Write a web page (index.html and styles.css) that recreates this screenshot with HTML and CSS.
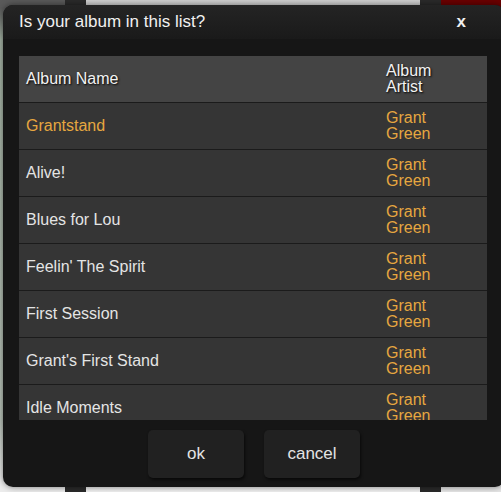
FILE: index.html
```html
<!DOCTYPE html>
<html lang="en">
<head>
  <meta charset="UTF-8" />
  <meta name="viewport" content="width=device-width, initial-scale=1.0" />
  <title>Is your album in this list?</title>
  <link rel="stylesheet" href="styles.css">
</head>
<body>

  <div class="page">
    <div class="strip strip-side"></div>
    <div class="strip strip-dark"></div>
    <div class="strip strip-art"></div>
    <div class="strip strip-dark"></div>
    <div class="strip strip-red"></div>
  </div>

  <div class="dialog">
    <div class="dialog-head">
      <span class="dialog-title">Is your album in this list?</span>
      <span class="dialog-close">x</span>
    </div>

    <div class="dialog-body">
      <div class="list-scroll">
        <table class="album-list">
          <thead>
            <tr>
              <th class="col-name">Album Name</th>
              <th class="col-artist">Album Artist</th>
            </tr>
          </thead>
          <tbody>
            <tr class="selected"><td>Grantstand</td><td class="artist">Grant Green</td></tr>
            <tr><td>Alive!</td><td class="artist">Grant Green</td></tr>
            <tr><td>Blues for Lou</td><td class="artist">Grant Green</td></tr>
            <tr><td>Feelin' The Spirit</td><td class="artist">Grant Green</td></tr>
            <tr><td>First Session</td><td class="artist">Grant Green</td></tr>
            <tr><td>Grant's First Stand</td><td class="artist">Grant Green</td></tr>
            <tr><td>Idle Moments</td><td class="artist">Grant Green</td></tr>
          </tbody>
        </table>
      </div>

      <div class="dialog-buttons">
        <button class="btn">ok</button>
        <button class="btn">cancel</button>
      </div>
    </div>
  </div>

</body>
</html>
```

FILE: styles.css
```css
html, body {
  margin: 0;
  height: 100%;
  overflow: hidden;
}
body {
  font-family: 'Liberation Sans', Arial, sans-serif;
  background: #cfcfcf;
}
.page {
  display: flex;
  height: 100%;
}
.strip {
  height: 100%;
}
.strip-side {
  width: 65px;
  background: linear-gradient(#5a5a5a 0, #5a5a5a 8px, #a3b2a3 40px, #b8c2b8 420px, #ececec 480px);
}
.strip-dark {
  width: 21px;
  background: #2a2a2a;
}
.strip-art {
  width: 334px;
  background: linear-gradient(#cfcfcf, #f0f0f0);
}
.strip-red {
  flex: 1;
  background: linear-gradient(#6b0000 0, #6b0000 12px, #3a3a3a 14px, #e6e6e6 480px);
}

.dialog {
  position: absolute;
  left: 3px;
  top: 5px;
  width: 502px;
  height: 482px;
  background: #161616;
  border-radius: 10px;
  box-shadow: 0 0 6px rgba(0,0,0,0.5);
  overflow: hidden;
  display: flex;
  flex-direction: column;
}
.dialog-head {
  display: flex;
  justify-content: space-between;
  align-items: center;
  height: 34px;
  padding: 0 39px 0 16px;
  background: linear-gradient(#242424, #1a1a1a);
  color: #f0f0f0;
}
.dialog-title {
  font-size: 17px;
}
.dialog-close {
  font-size: 17px;
  font-weight: bold;
}
.dialog-body {
  padding: 17px 16px 0;
}
.list-scroll {
  width: 468px;
  height: 364px;
  overflow: hidden;
}
.album-list {
  width: 468px;
  table-layout: fixed;
  border-collapse: collapse;
  font-size: 16px;
  line-height: 16px;
}
.album-list th,
.album-list td {
  padding: 7px;
  height: 32px;
  text-align: left;
  vertical-align: middle;
  border-bottom: 1px solid #1b1b1b;
}
.album-list th {
  background: #444;
  color: #f2f2f2;
  font-weight: normal;
  text-shadow: 1px 1px 2px #000;
}
.album-list td {
  background: #353535;
  color: #e4e4e4;
}
.col-name {
  width: 346px;
}
.album-list .col-artist,
.album-list td.artist {
  padding-right: 38px;
}
.album-list td.artist,
.album-list tr.selected td {
  color: #e6a740;
}
.dialog-buttons {
  display: flex;
  justify-content: center;
  gap: 20px;
  padding-top: 10px;
}
.btn {
  width: 96px;
  height: 48px;
  border: none;
  border-radius: 5px;
  background: #212121;
  color: #e4e4e4;
  font-family: 'Liberation Sans', Arial, sans-serif;
  font-size: 17px;
  box-shadow: 1px 2px 3px rgba(0,0,0,0.6);
}
```
